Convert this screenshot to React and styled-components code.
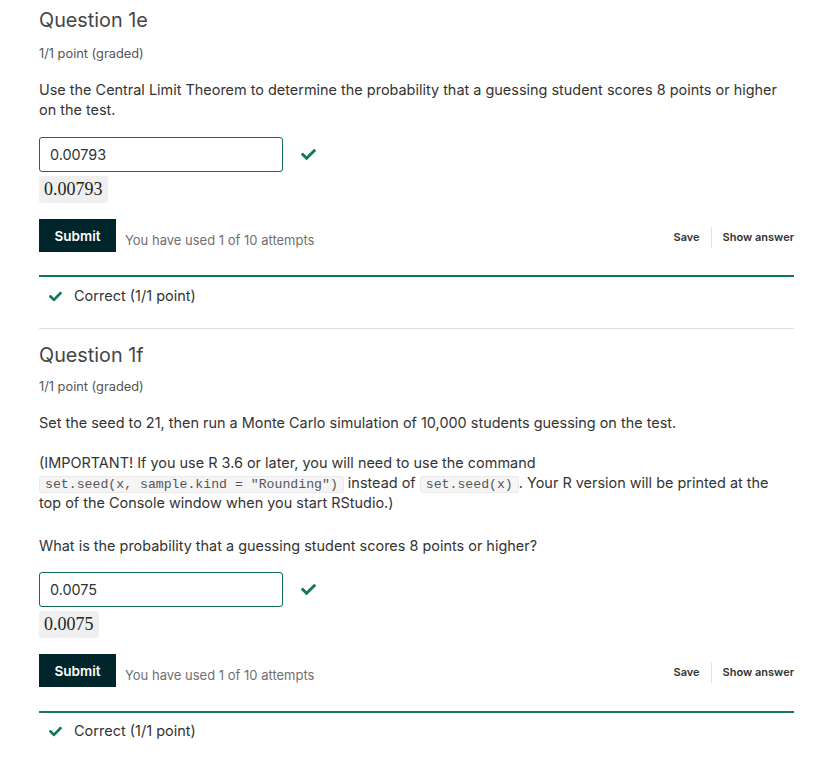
import React from "react";
import styled, { createGlobalStyle } from "styled-components";
import { FaCheck } from "react-icons/fa";

const Global = createGlobalStyle`
  html, body { margin: 0; padding: 0; background: #fff; }
  body { font-family: Inter, "Open Sans", sans-serif; color: #333; }
`;

const Page = styled.div`
  width: 755px;
  padding: 6px 0 0 39px;
`;

const Problem = styled.section`
  display: flex;
  flex-direction: column;
`;

const Divider = styled.hr`
  border: 0;
  border-top: 1px solid #dedede;
  margin: ${p => p.$top}px 0 ${p => p.$bottom}px;
`;

const Title = styled.h3`
  margin: 0;
  font-size: 19.8px;
  line-height: 28px;
  font-weight: 400;
  color: #454545;
`;

const Points = styled.div`
  margin-top: ${p => p.$gap}px;
  font-size: 12.8px;
  line-height: 20px;
  color: #555;
`;

const Para = styled.p`
  margin: ${p => p.$top || 0}px 0 0;
  font-size: 14.45px;
  line-height: 20px;
  color: #333;
`;

const Code = styled.code`
  font-family: "Liberation Mono", "Courier New", monospace;
  font-size: 13.2px;
  line-height: 1;
  white-space: nowrap;
  color: #555;
  background: #f5f5f5;
  border: 1px solid #eaeaea;
  border-radius: 3px;
  padding: 0 5px;
`;

const InputRow = styled.div`
  display: flex;
  align-items: center;
  gap: 18px;
  margin-top: ${p => p.$gap}px;
`;

const Input = styled.div`
  box-sizing: border-box;
  width: 244px;
  height: 35px;
  border: 1px solid #0e6f4f;
  border-radius: 3px;
  padding: 0 10px;
  display: flex;
  align-items: center;
  font-size: 14.4px;
  color: #333;
`;

const Check = styled(FaCheck)`
  color: #117a4f;
  width: ${p => p.$size}px;
  height: ${p => p.$size}px;
  flex: none;
`;

const MathBox = styled.div`
  align-self: flex-start;
  margin-top: 4px;
  height: 27px;
  padding: 0 5px;
  box-sizing: border-box;
  display: flex;
  align-items: center;
  background: #efefef;
  border-radius: 3px;
  font-family: "Liberation Serif", "DejaVu Serif", serif;
  font-size: 18px;
  color: #222;
`;

const ActionBar = styled.div`
  display: flex;
  align-items: center;
  margin-top: 16px;
`;

const SubmitButton = styled.button`
  width: 77px;
  height: 33px;
  border: 0;
  border-radius: 0;
  background: #00262b;
  color: #fff;
  font-family: Inter, sans-serif;
  font-size: 13.5px;
  font-weight: 600;
  padding: 0;
`;

const Attempts = styled.span`
  margin-left: 9px;
  margin-top: 9px;
  font-size: 13px;
  color: #707070;
`;

const Links = styled.div`
  margin-left: auto;
  display: flex;
  align-items: center;
  margin-top: 3px;
`;

const LinkBtn = styled.span`
  font-size: 11px;
  font-weight: 600;
  color: #333;
  padding: 0 ${p => p.$right}px 0 ${p => p.$left}px;
`;

const Sep = styled.span`
  width: 1px;
  height: 21px;
  background: #e2e2e2;
`;

const Feedback = styled.div`
  margin-top: ${p => p.$gap}px;
  border-top: 2px solid #117a4f;
  padding-top: ${p => p.$pad}px;
  display: flex;
  align-items: center;
`;

const FeedbackText = styled.span`
  margin-left: 12px;
  font-size: 14.5px;
  line-height: 20px;
  color: #333;
`;

const FeedbackIcon = styled.span`
  margin-left: 10px;
  display: flex;
`;

function Answer({ value, gap }) {
  return (
    <>
      <InputRow $gap={gap}>
        <Input>{value}</Input>
        <Check $size={15} />
      </InputRow>
      <MathBox>{value}</MathBox>
    </>
  );
}

function Actions() {
  return (
    <ActionBar>
      <SubmitButton>Submit</SubmitButton>
      <Attempts>You have used 1 of 10 attempts</Attempts>
      <Links>
        <LinkBtn $left={0} $right={11}>Save</LinkBtn>
        <Sep />
        <LinkBtn $left={11} $right={0}>Show answer</LinkBtn>
      </Links>
    </ActionBar>
  );
}

function Correct({ gap, pad }) {
  return (
    <Feedback $gap={gap} $pad={pad}>
      <FeedbackIcon>
        <Check $size={13} />
      </FeedbackIcon>
      <FeedbackText>Correct (1/1 point)</FeedbackText>
    </Feedback>
  );
}

export default function App() {
  return (
    <Page>
      <Global />
      <Problem>
        <Title>Question 1e</Title>
        <Points $gap={10}>1/1 point (graded)</Points>
        <Para $top={16}>
          Use the Central Limit Theorem to determine the probability that a guessing student scores 8 points or higher on the test.
        </Para>
        <Answer value="0.00793" gap={17} />
        <Actions />
        <Correct gap={23} pad={9} />
      </Problem>
      <Divider $top={22} $bottom={12} />
      <Problem>
        <Title>Question 1f</Title>
        <Points $gap={8}>1/1 point (graded)</Points>
        <Para $top={16}>
          Set the seed to 21, then run a Monte Carlo simulation of 10,000 students guessing on the test.
        </Para>
        <Para $top={20}>
          (IMPORTANT! If you use R 3.6 or later, you will need to use the command{" "}
          <Code>set.seed(x, sample.kind = "Rounding")</Code> instead of <Code>set.seed(x)</Code>. Your R version will be printed at the top of the Console window when you start RStudio.)
        </Para>
        <Para $top={23}>What is the probability that a guessing student scores 8 points or higher?</Para>
        <Answer value="0.0075" gap={16} />
        <Actions />
        <Correct gap={24} pad={8} />
      </Problem>
    </Page>
  );
}
